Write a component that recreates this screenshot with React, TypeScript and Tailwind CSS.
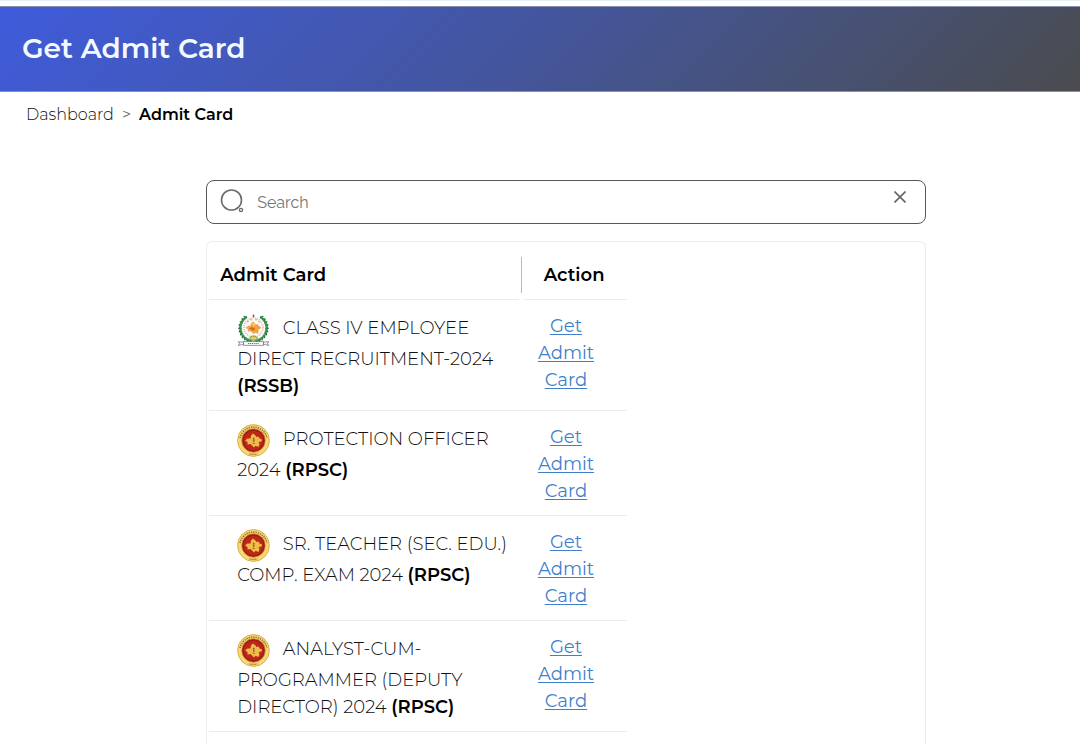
import React from "react";

type Board = "RSSB" | "RPSC";

interface Exam {
  title: string;
  board: Board;
}

const exams: Exam[] = [
  { title: "CLASS IV EMPLOYEE DIRECT RECRUITMENT-2024", board: "RSSB" },
  { title: "PROTECTION OFFICER 2024", board: "RPSC" },
  { title: "SR. TEACHER (SEC. EDU.) COMP. EXAM 2024", board: "RPSC" },
  { title: "ANALYST-CUM-PROGRAMMER (DEPUTY DIRECTOR) 2024", board: "RPSC" },
];

const STATE_SHAPE =
  "M8 16.5 L10.5 14.5 L13.5 14.5 L14 11.5 L16 9.5 L18 11 L19.5 13 L21.5 12.5 L22.5 14.5 L25 15.5 L24.5 17.5 L21.5 18 L22.5 20 L21.5 23 L18.5 21.8 L17 23.5 L15 21.5 L13.5 20 L10.5 20.5 L10.5 18 Z";

const leafAngles = [108, 121, 134, 147, 160, 173, 186, 199, 212, 225, 238];

function RssbEmblem() {
  return (
    <svg viewBox="0 0 33 33" className="mr-2 inline-block size-[33px] align-middle" aria-hidden="true">
      <circle cx="16.5" cy="14.5" r="9.6" fill="#fdf8f3" stroke="#d8b0a2" strokeWidth="1.4" strokeDasharray="1 1.1" />
      {[1, -1].map((side) => (
        <g key={side} transform={side === 1 ? undefined : "translate(33 0) scale(-1 1)"}>
          <path d="M12 27.5 A13 13 0 0 1 9.5 4" fill="none" stroke="#2b7d3c" strokeWidth="1" />
          {leafAngles.map((a) => {
            const t = (a * Math.PI) / 180;
            const x = 16.5 + 13.2 * Math.cos(t);
            const y = 15 + 13.2 * Math.sin(t);
            return (
              <g key={a} transform={`translate(${x} ${y}) rotate(${a})`}>
                <ellipse cx="1" cy="-0.6" rx="2" ry="0.9" transform="rotate(-42)" fill="#16702b" />
                <ellipse cx="-1" cy="-0.6" rx="1.9" ry="0.8" transform="rotate(42)" fill="#38934a" />
              </g>
            );
          })}
        </g>
      ))}
      <g transform="translate(2.5 1) scale(0.84)">
        <path d={STATE_SHAPE} fill="#f0a636" stroke="#eb8a2e" strokeWidth="0.6" />
        <path d="M11 17 L15 15.5 L19 18 L16 20 Z" fill="#e4602a" />
        <circle cx="17" cy="12.5" r="1.7" fill="#f6cf5a" />
      </g>
      <path d="M10 9 L12 8 M21 8 L23 9.5 M13 6.8 H15 M18 6.8 H20" stroke="#c98a86" strokeWidth="0.9" />
      <path d="M15.4 3 L16.5 1 L17.6 3 L16.5 4.8 Z" fill="#b84a3a" />
      <path d="M12.5 25.3 L14.5 23 H18.5 L20.5 25.3 L18.5 27.2 H14.5 Z" fill="#e3cb5c" stroke="#417b34" strokeWidth="0.7" />
      <path d="M1 28.8 L6.5 29 V31.4 L1 32.4 L3 30.6 Z M32 28.8 L26.5 29 V31.4 L32 32.4 L30 30.6 Z" fill="#f3f2f6" stroke="#5c5870" strokeWidth="0.6" />
      <path d="M6.5 28.5 H26.5 V32.4 H6.5 Z" fill="#f8f7fa" stroke="#55516b" strokeWidth="0.6" />
      <path d="M11 30.5 H22" stroke="#77728a" strokeWidth="1" strokeDasharray="1.2 0.7" />
    </svg>
  );
}

function RpscEmblem() {
  return (
    <svg viewBox="0 0 33 33" className="mr-2 inline-block size-[33px] align-middle" aria-hidden="true">
      <circle cx="16.5" cy="16.5" r="15.9" fill="#f6d874" stroke="#dca83c" strokeWidth="0.9" />
      <path d="M3 14 A13.8 13.8 0 0 1 30 14" fill="none" stroke="#96702f" strokeWidth="1.6" strokeDasharray="1.3 1" />
      <path d="M12.5 29.8 Q16.5 31 20.5 29.8" fill="none" stroke="#a66d2c" strokeWidth="1.3" strokeDasharray="1.2 0.7" />
      <circle cx="16.5" cy="16.5" r="11.7" fill="#a31a14" stroke="#c78634" strokeWidth="0.7" />
      <circle cx="16.5" cy="16.5" r="9.8" fill="#bd2718" />
      <path d={STATE_SHAPE} fill="#f0bd4a" />
      <path d="M15.7 14.8 H17.8 M16.7 13.6 V18 M15.5 19.3 H18 M15.9 16.8 H17.6" stroke="#8a5a1f" strokeWidth="0.8" />
    </svg>
  );
}

function Emblem({ board }: { board: Board }) {
  return board === "RSSB" ? <RssbEmblem /> : <RpscEmblem />;
}

function SearchBar() {
  return (
    <form className="flex h-11 items-center rounded-lg border border-[#55575a] pr-4 pl-3" onSubmit={(e) => e.preventDefault()}>
      <svg viewBox="0 0 26 26" className="size-[26px] shrink-0" fill="none" stroke="#696b6e" aria-hidden="true">
        <circle cx="12.5" cy="11" r="10" strokeWidth="1.6" />
        <circle cx="22" cy="20.9" r="1.6" strokeWidth="1.3" />
      </svg>
      <input
        type="text"
        aria-label="Search"
        placeholder="Search"
        className="ml-3 min-w-0 flex-1 bg-transparent pt-0.5 font-['Raleway','Montserrat','Inter',sans-serif] text-[16px] text-gray-700 outline-none placeholder:text-[#737578]"
      />
      <button type="reset" aria-label="Clear search" className="mb-2.5 flex size-[18px] items-center justify-center">
        <svg viewBox="0 0 12 12" className="size-3" stroke="#626568" strokeWidth="1.6" fill="none">
          <path d="M0.5 0.5 L11.5 11.5 M11.5 0.5 L0.5 11.5" />
        </svg>
      </button>
    </form>
  );
}

export default function App() {
  return (
    <div className="flex h-screen flex-col overflow-hidden border-t border-[#e6eff5] bg-white font-['Montserrat','Inter','Liberation_Sans',sans-serif] text-[#101012]">
      <header className="mt-[5px] flex h-[86px] shrink-0 items-center border-y border-[#8590b5] bg-linear-135 from-[#3f5bdb] via-[#44559b] to-[#4a4b4e] px-[22px] pb-0.5">
        <h1 className="text-[28px] font-semibold text-[#f4f9ff]">Get Admit Card</h1>
      </header>

      <nav aria-label="Breadcrumb" className="flex h-[46px] shrink-0 items-center gap-2 px-[26px] text-[16px]">
        <a href="#dashboard" className="font-light">Dashboard</a>
        <span className="font-light text-[#55575a]">&gt;</span>
        <span className="font-semibold text-black" aria-current="page">Admit Card</span>
      </nav>

      <main className="flex min-h-0 flex-1 flex-col items-center pt-[42px] pl-[52px]">
        <div className="flex min-h-0 w-[70%] flex-1 flex-col gap-[17px]">
          <SearchBar />
          <section className="min-h-0 flex-1 overflow-hidden rounded-t-md border border-b-0 border-[#ececee] px-0.5">
            <table className="w-[418px] table-fixed border-separate border-spacing-0 text-[18px] leading-[27px]">
              <colgroup>
                <col className="w-3/4" />
                <col className="w-1/4" />
              </colgroup>
              <thead>
                <tr className="text-left text-black">
                  <th scope="col" className="p-0 font-semibold">
                    <div className="mr-1 flex h-[58px] items-center border-b border-[#ececee] pt-2.5 pl-[11px]">Admit Card</div>
                  </th>
                  <th scope="col" className="p-0 font-semibold">
                    <div className="-ml-0.5 flex h-[58px] items-center">
                      <span className="mt-2 h-9 w-px bg-[#b9b9bc]" />
                      <span className="ml-0.5 flex h-full flex-1 items-center border-b border-[#ececee] pt-2.5 pl-5">Action</span>
                    </div>
                  </th>
                </tr>
              </thead>
              <tbody>
                {exams.map((exam) => (
                  <tr key={exam.title}>
                    <td className="border-b border-[#ececee] pt-[13px] pr-2 pb-2.5 pl-7 align-top font-light">
                      <Emblem board={exam.board} /> {exam.title}{" "}
                      <strong className="font-semibold text-black">({exam.board})</strong>
                    </td>
                    <td className="border-b border-[#ececee] px-3 pt-[13px] pb-2.5 text-center align-top">
                      <a href="#admit-card" className="mr-[18px] block text-[#3f7fcb] underline underline-offset-2">
                        Get Admit Card
                      </a>
                    </td>
                  </tr>
                ))}
                <tr>
                  <td colSpan={2} className="pt-[13px] pl-7">
                    <RssbEmblem />
                  </td>
                </tr>
              </tbody>
            </table>
          </section>
        </div>
      </main>
    </div>
  );
}
